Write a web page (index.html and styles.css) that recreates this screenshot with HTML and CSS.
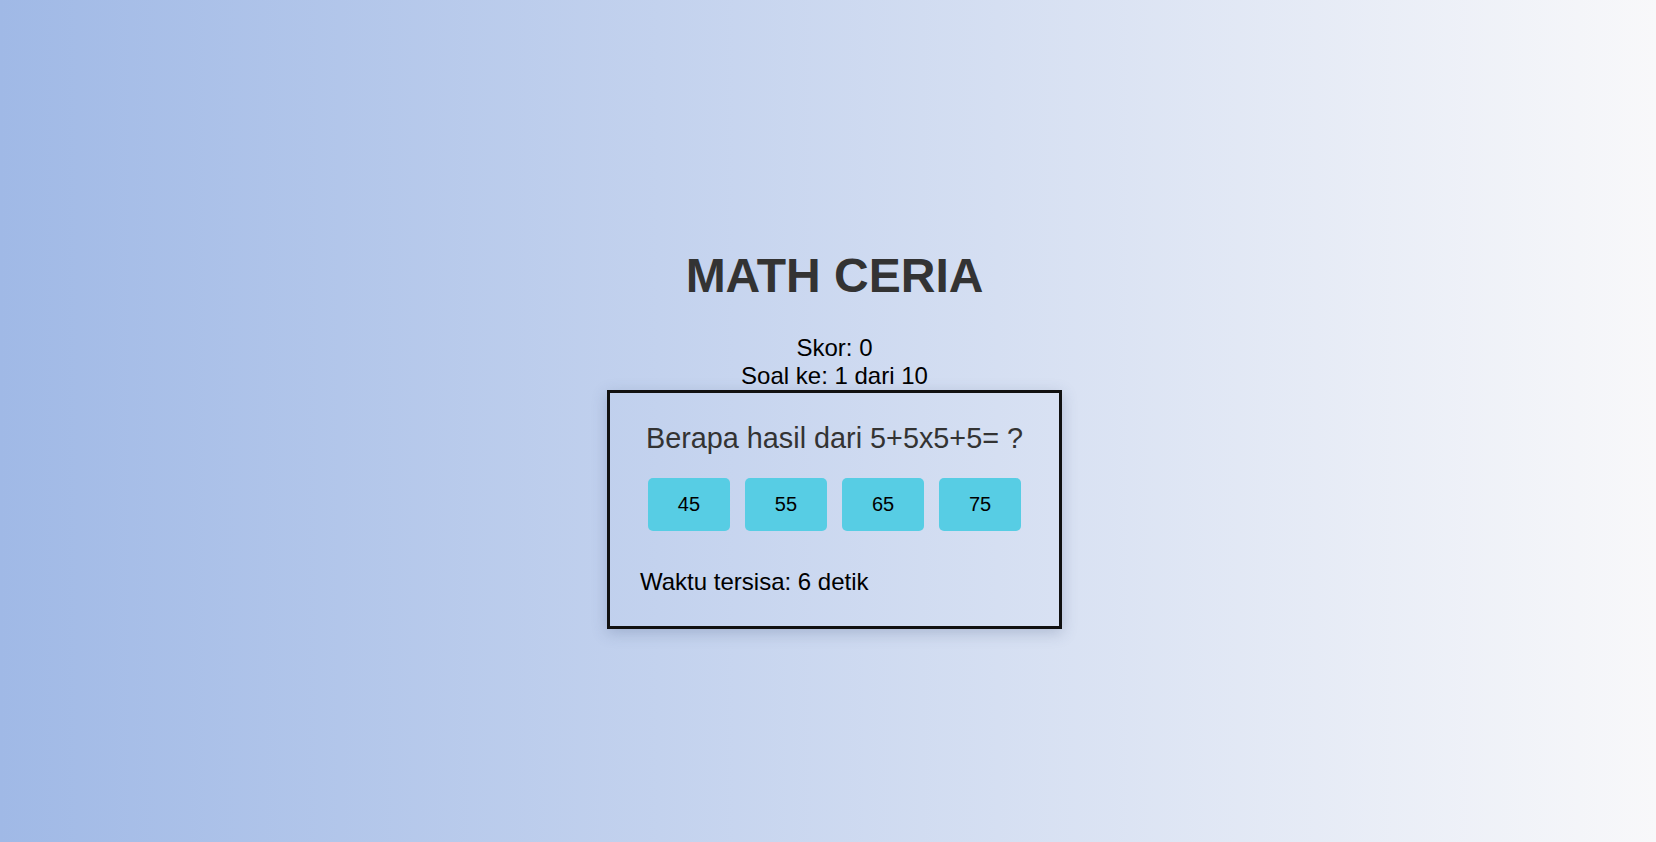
FILE: index.html
```html
<!DOCTYPE html>
<html lang="id">
<head>
<meta charset="utf-8">
<title>Math Ceria</title>
<link rel="stylesheet" href="styles.css">
</head>
<body>
<main class="page">
  <h1 class="title">MATH CERIA</h1>
  <div class="info">
    <div>Skor: 0</div>
    <div>Soal ke: 1 dari 10</div>
  </div>
  <section class="quiz">
    <p class="question">Berapa hasil dari 5+5x5+5= ?</p>
    <div class="options">
      <button class="option">45</button>
      <button class="option">55</button>
      <button class="option">65</button>
      <button class="option">75</button>
    </div>
    <p class="timer">Waktu tersisa: 6 detik</p>
  </section>
</main>
</body>
</html>
```
FILE: styles.css
```css
html, body {
  margin: 0;
  height: 100%;
}
body {
  font-family: "Liberation Sans", Arial, sans-serif;
  background: linear-gradient(90deg, #a0b9e6 0%, #f8f8fa 100%);
  color: #000;
  overflow: hidden;
}
.page {
  display: flex;
  flex-direction: column;
  align-items: center;
  padding-top: 248px;
  padding-left: 13px;
}
.title {
  margin: 0 0 31px;
  font-size: 48px;
  font-weight: bold;
  color: #333;
  line-height: normal;
}
.info {
  font-size: 24px;
  text-align: center;
  margin-bottom: 0;
}
.quiz {
  box-sizing: border-box;
  width: 455px;
  border: 3px solid #111;
  padding: 29px 30px 30px;
  box-shadow: 0 4px 14px rgba(60, 80, 120, 0.25);
}
.question {
  margin: 0 0 23px;
  font-size: 28.8px;
  color: #333;
  text-align: center;
}
.options {
  display: flex;
  justify-content: center;
  gap: 14.8px;
}
.option {
  font-family: "Liberation Sans", Arial, sans-serif;
  font-size: 20px;
  padding: 15px 30px;
  border: none;
  border-radius: 5px;
  background: #57cde4;
  color: #000;
  line-height: normal;
}
.timer {
  margin: 37px 0 0;
  font-size: 24px;
}
```
